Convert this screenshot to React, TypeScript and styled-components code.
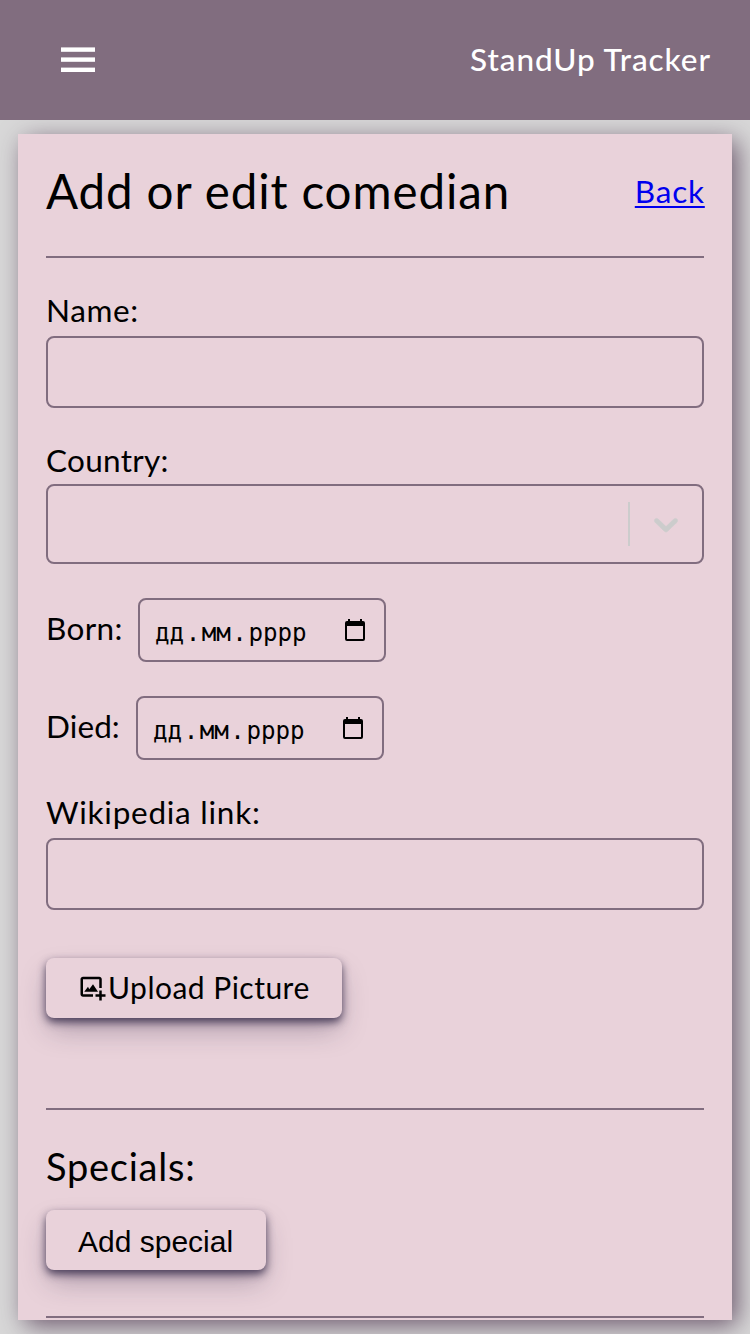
import React from "react";
import styled, { createGlobalStyle } from "styled-components";
import { BiImageAdd } from "react-icons/bi";

const plum = "#816d7f";
const rose = "#e9d2da";

const GlobalStyle = createGlobalStyle`
  * { box-sizing: border-box; }
  body {
    margin: 0;
    background: #d8d8d8;
    font-family: Lato, "Open Sans", sans-serif;
    font-size: 31.5px;
    color: #000;
  }
`;

const Page = styled.div`
  height: 1334px;
  overflow: hidden;
  display: flex;
  flex-direction: column;
`;

const Header = styled.header`
  flex: none;
  height: 120px;
  padding: 0 40px 0 61px;
  display: flex;
  align-items: center;
  justify-content: space-between;
  background: ${plum};
  color: #fff;
`;

const MenuIcon = styled.svg`
  display: block;
  width: 34px;
  height: 26px;
`;

const Text = styled.span<{ $spacing?: number }>`
  white-space: nowrap;
  letter-spacing: ${(p) => p.$spacing ?? 0}px;
  margin-right: ${(p) => -(p.$spacing ?? 0)}px;
`;

const Brand = styled(Text)`
  font-weight: 500;
  padding-bottom: 2px;
`;

const Card = styled.main`
  flex: none;
  margin: 14px 18px 0;
  height: 1186px;
  padding: 0 28px;
  display: flex;
  flex-direction: column;
  background: ${rose};
  box-shadow: 6px 6px 24px -1px #6a556a;
  clip-path: inset(-14px -18px -14px -18px);
`;

const TitleRow = styled.div`
  height: 122px;
  padding-bottom: 9px;
  display: flex;
  align-items: center;
  justify-content: space-between;
`;

const Title = styled.h1`
  margin: 0;
  font-size: 47.5px;
  font-weight: 400;
`;

const Divider = styled.hr<{ $top?: number }>`
  flex: none;
  width: 100%;
  height: 2px;
  margin: ${(p) => p.$top ?? 0}px 0 0;
  border: 0;
  background: ${plum};
`;

const BackLink = styled.a`
  color: #0000ee;
  text-decoration: underline;
  text-decoration-thickness: 2px;
  text-underline-offset: 3px;
`;

const Field = styled.label<{ $top: number; $gap: number }>`
  display: flex;
  flex-direction: column;
  gap: ${(p) => p.$gap}px;
  margin-top: ${(p) => p.$top}px;
  line-height: 40px;
`;

const TextInput = styled.input`
  height: 72px;
  padding: 0 14px;
  border: 2px solid ${plum};
  border-radius: 8px;
  background: transparent;
  font: inherit;
  outline: none;
`;

const Select = styled.div`
  height: 80px;
  display: flex;
  align-items: center;
  justify-content: flex-end;
  border: 2px solid ${plum};
  border-radius: 8px;
`;

const SelectSeparator = styled.span`
  width: 2px;
  height: 44px;
  background: #ccc;
`;

const Chevron = styled.svg`
  width: 40px;
  height: 40px;
  margin: 0 16px;
  fill: #ccc;
  stroke: #ccc;
  stroke-width: 0.3;
`;

const DateRow = styled.div`
  height: 64px;
  margin-top: 34px;
  display: flex;
  align-items: center;
`;

const DateLabel = styled.span<{ $width: number }>`
  width: ${(p) => p.$width}px;
  padding-bottom: 4px;
`;

const DateBox = styled.div`
  width: 248px;
  height: 64px;
  padding: 5px 19px 0 13.5px;
  display: flex;
  align-items: center;
  border: 2px solid ${plum};
  border-radius: 8px;
  font-family: "DejaVu Sans Mono", monospace;
  font-size: 24.2px;
`;

const DatePart = styled.span`
  padding: 0 1.5px;
`;

const CalendarIcon = styled.svg`
  width: 20px;
  height: 22px;
  margin: 0 0 6px auto;
`;

const Button = styled.button<{ $width: number; $top?: number; $drop?: number; $font?: string }>`
  flex: none;
  width: ${(p) => p.$width}px;
  height: 60px;
  margin-top: ${(p) => p.$top ?? 0}px;
  padding: ${(p) => p.$drop ?? 0}px 0 0 32px;
  display: flex;
  align-items: center;
  border: 0;
  border-radius: 8px;
  background: ${rose};
  color: #000;
  font-family: ${(p) => p.$font ?? "inherit"};
  font-size: 30px;
  box-shadow: rgba(45, 35, 66, 0.8) 0 4px 9px, rgba(45, 35, 66, 0.35) 0 14px 28px -4px;
`;

const ButtonLabel = styled(Text)`
  padding-bottom: 2px;
`;

const Subtitle = styled.h2`
  margin: 32px 0 0;
  height: 68px;
  line-height: 48px;
  font-size: 38px;
  font-weight: 400;
`;

const DateField = ({ label, width, spacing }: { label: string; width: number; spacing: number }) => (
  <DateRow>
    <DateLabel $width={width}>
      <Text $spacing={spacing}>{label}</Text>
    </DateLabel>
    <DateBox>
      <DatePart>дд</DatePart>.<DatePart>мм</DatePart>.<DatePart>рррр</DatePart>
      <CalendarIcon viewBox="0 0 20 22">
        <path
          fillRule="evenodd"
          d="M3 0h2v2h10V0h2v2h1a2 2 0 0 1 2 2v16a2 2 0 0 1-2 2H2a2 2 0 0 1-2-2V4a2 2 0 0 1 2-2h1zM2 7v13h16V7z"
        />
      </CalendarIcon>
    </DateBox>
  </DateRow>
);

export default function App() {
  return (
    <Page>
      <GlobalStyle />
      <Header>
        <MenuIcon viewBox="0 0 34 26" fill="#fff">
          <rect y="0.4" width="34" height="4.4" />
          <rect y="10.4" width="34" height="4.4" />
          <rect y="20.6" width="34" height="4.4" />
        </MenuIcon>
        <Brand $spacing={0.92}>StandUp Tracker</Brand>
      </Header>
      <Card>
        <TitleRow>
          <Title>
            <Text $spacing={0.9}>Add or edit comedian</Text>
          </Title>
          <BackLink href="#">
            <Text $spacing={0.8}>Back</Text>
          </BackLink>
        </TitleRow>
        <Divider />
        <Field $top={32} $gap={6}>
          <Text $spacing={0.6}>Name:</Text>
          <TextInput />
        </Field>
        <Field $top={32} $gap={4}>
          <Text $spacing={0.3}>Country:</Text>
          <Select>
            <SelectSeparator />
            <Chevron viewBox="0 0 20 20">
              <path d="M4.516 7.548c0.436-0.446 1.043-0.481 1.576 0l3.908 3.747 3.908-3.747c0.533-0.481 1.141-0.446 1.574 0 0.436 0.445 0.408 1.197 0 1.615-0.406 0.418-4.695 4.502-4.695 4.502-0.217 0.223-0.502 0.335-0.787 0.335s-0.57-0.112-0.789-0.335c0 0-4.287-4.084-4.695-4.502s-0.436-1.17 0-1.615z" />
            </Chevron>
          </Select>
        </Field>
        <DateField label="Born:" width={92} spacing={0.35} />
        <DateField label="Died:" width={90} spacing={0.1} />
        <Field $top={32} $gap={6}>
          <Text $spacing={0.75}>Wikipedia link:</Text>
          <TextInput />
        </Field>
        <Button $width={296} $top={48}>
          <BiImageAdd />
          <ButtonLabel $spacing={0.48}>Upload Picture</ButtonLabel>
        </Button>
        <Divider $top={90} />
        <Subtitle>
          <Text $spacing={0.75}>Specials:</Text>
        </Subtitle>
        <Button $width={220} $drop={3} $font={'"Liberation Sans", Arial, sans-serif'}>
          Add special
        </Button>
        <Divider $top={46} />
      </Card>
    </Page>
  );
}
